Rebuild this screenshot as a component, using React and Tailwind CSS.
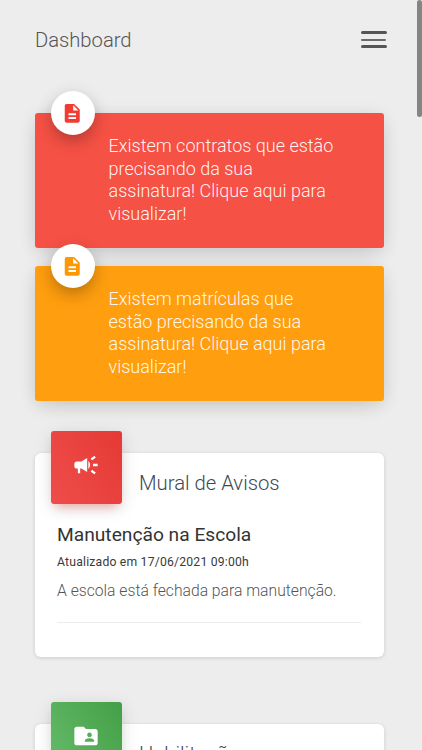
import React from 'react';
import { MdCampaign, MdDescription, MdFolderShared } from 'react-icons/md';

const alerts = [
  {
    id: 'contracts',
    text: 'Existem contratos que estão precisando da sua assinatura! Clique aqui para visualizar!',
    card: 'bg-[#f65145] mb-[18px]',
    icon: 'text-[#f03c33]',
  },
  {
    id: 'enrollments',
    text: 'Existem matrículas que estão precisando da sua assinatura! Clique aqui para visualizar!',
    card: 'bg-[#ff9e0f]',
    icon: 'text-[#ff9800]',
  },
];

const notices = [
  {
    id: 1,
    title: 'Manutenção na Escola',
    updatedAt: '17/06/2021 09:00h',
    body: 'A escola está fechada para manutenção.',
  },
];

const Header = () => (
  <header className="flex items-center justify-between pl-[35px] pr-[35px] h-[79px]">
    <h1 className="text-[20.2px] leading-[24px] font-light text-[#555555]">Dashboard</h1>
    <button type="button" aria-label="Menu" className="flex flex-col gap-[4px]">
      <span className="block w-[26px] h-[3px] rounded-full bg-[#555555]" />
      <span className="block w-[25px] h-[2px] rounded-full bg-[#6b6b6b] my-[0.5px]" />
      <span className="block w-[26px] h-[3px] rounded-full bg-[#555555]" />
    </button>
  </header>
);

const AlertCard = ({ text, card, icon }) => (
  <div
    className={`relative h-[135px] rounded-[3px] pl-[73.5px] pr-[48px] pt-[22px] shadow-[0_8px_22px_-6px_rgba(0,0,0,0.12),0_3px_18px_rgba(0,0,0,0.09)] ${card}`}
  >
    <div
      className={`absolute left-[16px] -top-[22px] flex size-[43.5px] items-center justify-center rounded-full bg-white pr-[1px] shadow-[0_8px_20px_-6px_rgba(0,0,0,0.36),0_3px_18px_rgba(0,0,0,0.1)] ${icon}`}
    >
      <MdDescription size={22.5} />
    </div>
    <p className="text-[18px] leading-[22.6px] font-light text-white/95">{text}</p>
  </div>
);

const PanelTitle = ({ title, tile, children }) => (
  <div className="flex h-[51px]">
    <div
      className={`-mt-[22px] ml-[16px] flex h-[73px] w-[71px] shrink-0 items-center justify-center rounded-[3px] bg-linear-60 pb-[5px] pr-[1px] text-white ${tile}`}
    >
      {children}
    </div>
    <h2 className="ml-[17px] mt-[16px] text-[20.3px] leading-[28px] font-light text-[#3c4858]">{title}</h2>
  </div>
);

const Notice = ({ title, updatedAt, body }) => (
  <article className="ml-[22px] mr-[23px] mt-[17px] border-b border-[#ececec] pb-[19px]">
    <h3 className="text-[19.2px] leading-[28px] font-[365] text-[#333333]">{title}</h3>
    <p className="mt-[3px] text-[12.2px] leading-[20px] font-[370] tracking-[0.2px] text-[#3a3a3a]">
      Atualizado em {updatedAt}
    </p>
    <p className="mt-[7px] text-[15.7px] leading-[24px] font-light text-[#555555]">{body}</p>
  </article>
);

const App = () => (
  <div className="relative h-[750px] w-[422px] overflow-hidden bg-[#ededed] font-['Roboto',sans-serif]">
    <Header />

    <main className="mt-[34px] pl-[35px] pr-[38px]">
      {alerts.map((alert) => (
        <AlertCard key={alert.id} text={alert.text} card={alert.card} icon={alert.icon} />
      ))}

      {/* Notice board */}
      <section className="mt-[52px] h-[204px] rounded-[6px] bg-white shadow-[0_1px_4px_rgba(0,0,0,0.14)]">
        <PanelTitle
          title="Mural de Avisos"
          tile="from-[#ee4d4a] to-[#e53935] shadow-[0_4px_18px_rgba(0,0,0,0.12),0_7px_10px_-5px_rgba(244,67,54,0.4)]"
        >
          <MdCampaign size={28} />
        </PanelTitle>
        {notices.map((notice) => (
          <Notice key={notice.id} title={notice.title} updatedAt={notice.updatedAt} body={notice.body} />
        ))}
      </section>

      {/* Qualifications */}
      <section className="mt-[67px] h-[204px] rounded-[6px] bg-white shadow-[0_1px_4px_rgba(0,0,0,0.14)]">
        <PanelTitle
          title="Habilitações"
          tile="from-[#66bb6a] to-[#43a047] shadow-[0_4px_18px_rgba(0,0,0,0.12),0_7px_10px_-5px_rgba(76,175,80,0.4)]"
        >
          <MdFolderShared size={28} />
        </PanelTitle>
      </section>
    </main>

    {/* Scrollbar thumb */}
    <div className="absolute right-0 top-0 h-[117px] w-[5px] rounded-[3px] bg-[#858585]" />
  </div>
);

export default App;
